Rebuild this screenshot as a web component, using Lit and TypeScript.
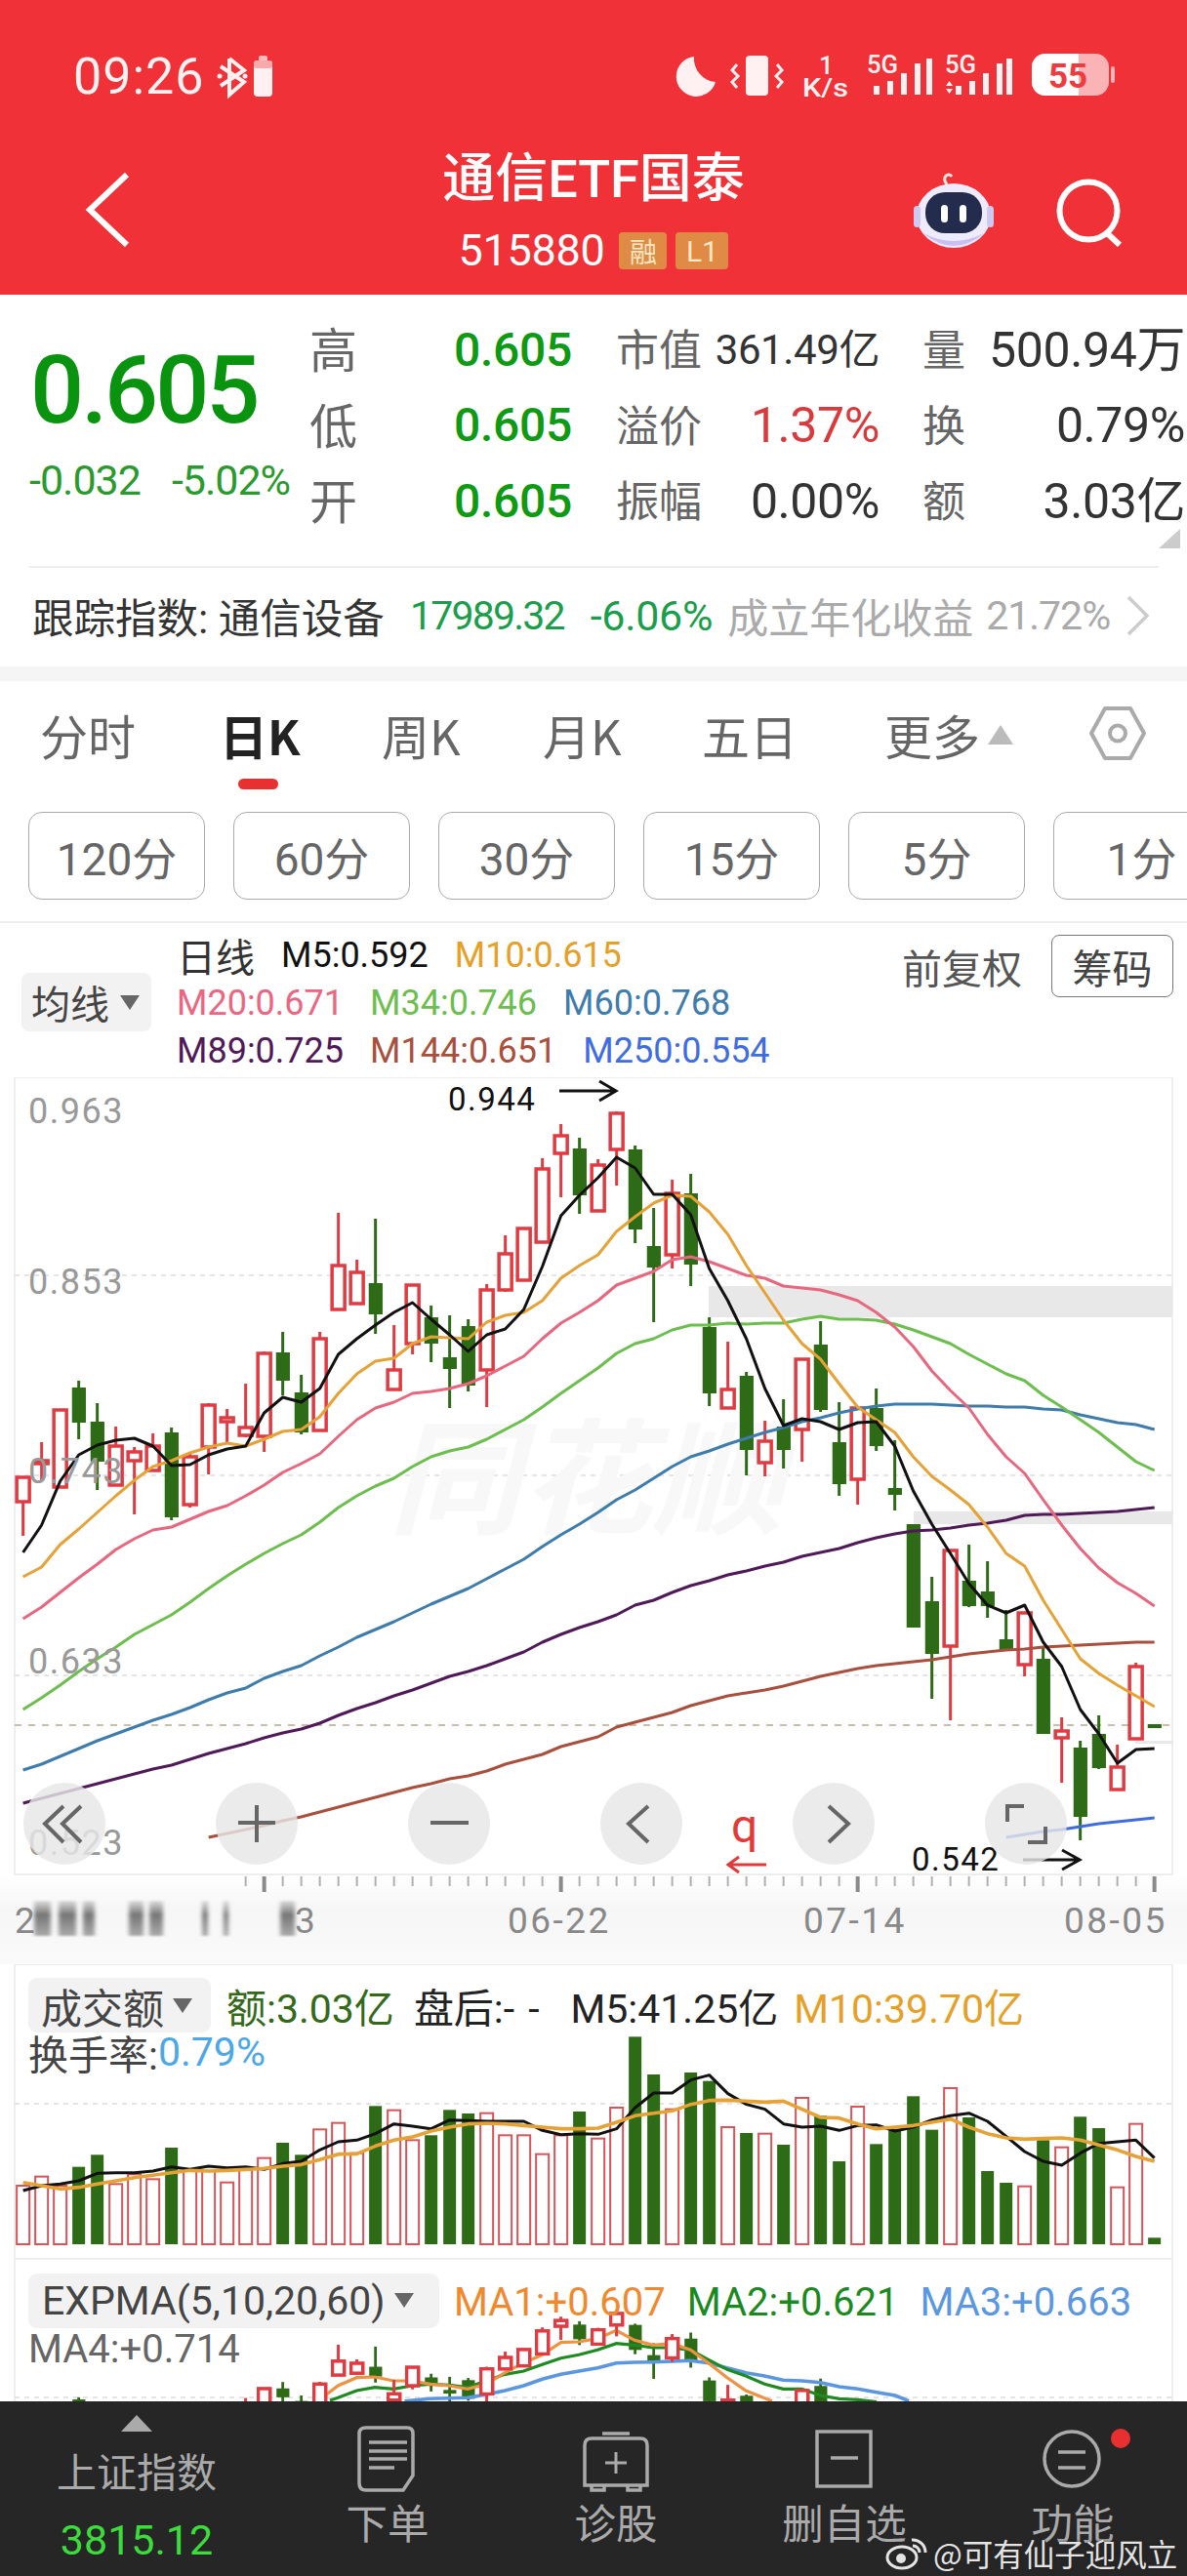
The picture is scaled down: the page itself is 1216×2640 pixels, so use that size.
import { LitElement, html, css, svg } from "lit";
import { customElement } from "lit/decorators.js";

type C = [number, number, number, number, number];
// 1 = up (hollow red), 0 = down (solid green); hi, top, bottom, lo
const CANDLES: C[] = [
  [1,1513,1514,1539,1574],[1,1478,1497,1500,1517],[1,1445,1445,1524,1524],[0,1415,1422,1458,1475],[0,1438,1457,1498,1527],
  [1,1462,1482,1522,1522],[1,1483,1488,1497,1552],[1,1469,1482,1507,1507],[0,1463,1468,1555,1558],[1,1490,1493,1542,1545],
  [1,1438,1440,1483,1511],[1,1444,1453,1457,1480],[1,1418,1463,1471,1473],[1,1385,1387,1472,1488],[0,1365,1386,1415,1430],
  [0,1409,1427,1468,1470],[1,1365,1372,1466,1466],[1,1243,1297,1342,1342],[1,1291,1304,1336,1336],[0,1249,1315,1347,1367],
  [1,1358,1404,1424,1424],[1,1316,1317,1377,1388],[0,1338,1350,1377,1396],[0,1348,1391,1403,1443],[0,1352,1359,1420,1426],
  [1,1316,1322,1404,1442],[1,1266,1285,1322,1324],[1,1258,1259,1312,1312],[1,1187,1198,1273,1273],[1,1152,1164,1182,1227],
  [0,1166,1177,1225,1244],[1,1188,1194,1241,1241],[1,1139,1141,1178,1215],[0,1174,1178,1260,1274],[0,1238,1277,1299,1355],
  [1,1209,1223,1286,1300],[0,1203,1223,1296,1318],[0,1350,1360,1428,1441],[1,1375,1424,1443,1443],[0,1406,1410,1486,1512],
  [1,1456,1477,1499,1513],[0,1434,1462,1486,1505],[1,1392,1393,1465,1498],[0,1354,1378,1445,1447],[0,1437,1478,1521,1533],
  [1,1442,1443,1516,1542],[0,1423,1443,1482,1487],[0,1476,1525,1532,1548],[0,1562,1562,1668,1668],[0,1616,1641,1695,1741],
  [1,1588,1589,1687,1763],[0,1583,1620,1646,1647],[0,1600,1631,1646,1658],[0,1650,1680,1692,1692],[1,1652,1653,1706,1718],
  [0,1687,1700,1777,1777],[1,1760,1774,1781,1827],[0,1784,1791,1862,1886],[0,1758,1777,1812,1813],[1,1788,1811,1834,1834],
  [1,1704,1708,1782,1782],[0,1767,1767,1771,1771],
];
const M5 = [1591,1563,1518,1491,1481,1476,1474,1482,1502,1501,1491,1485,1482,1448,1432,1437,1423,1388,1372,1358,1345,1335,1352,1368,1385,1368,1362,1342,1298,1246,1225,1207,1186,1197,1224,1224,1245,1300,1333,1372,1423,1461,1454,1457,1465,1458,1457,1482,1528,1562,1592,1623,1645,1653,1645,1683,1708,1752,1777,1807,1793,1792];
const M10 = [1616,1606,1583,1567,1550,1533,1517,1503,1497,1489,1483,1479,1482,1475,1467,1465,1452,1428,1408,1395,1392,1377,1370,1371,1372,1355,1348,1345,1333,1310,1297,1286,1262,1247,1233,1225,1226,1242,1265,1297,1325,1353,1377,1393,1418,1442,1455,1468,1493,1513,1527,1542,1565,1592,1605,1640,1670,1700,1715,1727,1738,1749];
const M20 = [1659,1647,1632,1617,1603,1588,1577,1568,1565,1557,1549,1543,1533,1522,1509,1500,1490,1472,1455,1443,1437,1428,1426,1423,1418,1410,1400,1390,1372,1356,1345,1333,1317,1310,1303,1291,1288,1293,1300,1307,1310,1318,1320,1322,1327,1333,1345,1360,1380,1405,1425,1443,1470,1493,1510,1537,1563,1587,1607,1622,1633,1646];
const M34 = [1752,1740,1727,1713,1700,1688,1675,1665,1655,1642,1628,1615,1603,1592,1582,1573,1560,1545,1533,1523,1515,1503,1493,1487,1483,1475,1465,1455,1442,1428,1415,1402,1387,1377,1372,1363,1358,1358,1356,1357,1356,1356,1352,1349,1352,1352,1353,1357,1363,1370,1377,1388,1398,1408,1415,1430,1442,1455,1468,1483,1498,1507];
const M60 = [1814,1808,1800,1792,1784,1777,1770,1763,1757,1750,1742,1735,1730,1720,1713,1707,1697,1688,1678,1670,1662,1653,1644,1636,1628,1618,1608,1598,1585,1573,1562,1550,1537,1527,1515,1503,1493,1487,1480,1474,1468,1463,1457,1453,1448,1444,1441,1439,1439,1439,1440,1441,1441,1442,1442,1444,1445,1450,1454,1458,1460,1465];
const M89 = [1848,1843,1838,1833,1828,1823,1818,1813,1809,1803,1797,1792,1787,1781,1776,1772,1766,1758,1751,1745,1738,1732,1725,1718,1713,1707,1700,1693,1683,1675,1668,1662,1655,1645,1640,1632,1625,1620,1614,1610,1605,1601,1595,1591,1587,1581,1576,1572,1569,1568,1566,1563,1561,1558,1553,1552,1552,1551,1550,1549,1547,1545];
const M144 = [1883,1879,1875,1871,1866,1862,1857,1852,1847,1842,1837,1832,1828,1823,1820,1815,1808,1803,1798,1790,1785,1780,1770,1765,1760,1755,1748,1743,1738,1735,1732,1728,1723,1718,1714,1710,1707,1705,1703,1701,1698,1695,1693,1691,1690,1688,1687,1686,1685,1684,1683,1683];
const M250 = [1883,1880,1877,1875,1872,1869,1867,1865,1863];

// volume panel: [up?, top] in zoom-row units
const VOL: [number, number][] = [[1,780],[1,752],[1,780],[0,722],[0,685],[1,775],[1,745],[1,760],[0,663],[1,735],[1,735],[1,770],[1,730],[1,695],[0,648],[0,685],[1,607],[1,587],[1,680],[0,535],[1,548],[1,640],[0,625],[0,547],[0,558],[1,557],[1,625],[1,625],[1,683],[1,625],[0,552],[1,635],[1,540],[0,322],[0,438],[1,545],[0,432],[0,458],[1,600],[0,618],[1,620],[0,654],[1,510],[0,565],[0,705],[1,537],[0,652],[0,605],[0,505],[0,608],[1,480],[0,570],[0,735],[0,771],[1,782],[0,640],[1,662],[0,568],[0,603],[1,785],[1,590],[0,940]];
const VB = [795,780,775,765,742,740,740,735,722,730,720,725,722,730,712,705,670,645,640,620,590,597,605,578,580,582,582,582,610,623,620,622,605,540,495,495,455,440,497,530,545,590,600,597,610,595,593,612,600,578,565,557,582,628,675,705,717,680,650,645,640,695];
const VO = [770,780,790,785,775,765,755,748,740,733,735,733,730,727,720,715,700,683,682,658,640,630,612,600,590,588,590,595,600,605,605,603,585,565,557,550,530,518,517,520,523,520,545,570,572,590,605,600,595,585,575,600,620,633,637,635,633,640,655,670,690,705];

const E_OR = [[512,240],[543,195],[573,170],[602,168],[632,180],[662,180],[691,190],[721,195],[751,205],[781,190],[811,155],[841,125],[871,100],[901,62],[930,60],[960,50],[990,25],[1019,55],[1049,70],[1079,65],[1109,85],[1138,125],[1168,170],[1198,210],[1240,242]];
const E_GR = [[530,240],[543,232],[573,210],[602,200],[632,205],[662,195],[691,190],[721,193],[751,200],[781,180],[811,160],[841,150],[871,130],[901,110],[930,100],[960,85],[990,65],[1019,70],[1049,78],[1079,78],[1109,85],[1138,115],[1168,145],[1198,165],[1228,190],[1258,205],[1288,205],[1318,225],[1348,235],[1378,238],[1408,245]];
const E_BL = [[650,242],[691,235],[721,233],[751,232],[781,222],[811,210],[841,195],[871,175],[901,160],[930,150],[960,140],[990,125],[1019,123],[1049,122],[1079,120],[1109,118],[1138,125],[1168,140],[1198,155],[1228,165],[1258,178],[1288,180],[1318,185],[1348,198],[1378,205],[1408,215],[1438,225],[1460,242]];

const X = (i: number) => 23.65 + 19 * i;
const GREEN = "#2e6b16";
const RED = "#df3b42";

const linePts = (ys: number[], start = 0) => ys.map((y, i) => `${X(i + start).toFixed(1)},${y}`).join(" ");

function candle(c: C, i: number, map: (y: number) => number, bw: number, sw: number) {
  const [up, hi, top, bot, lo] = c;
  const x = X(i);
  const h = map(hi), t = map(top), b = map(bot), l = map(lo);
  if (up) {
    return svg`<path d="M${x} ${h}V${t}M${x} ${b}V${l}" stroke=${RED} stroke-width=${sw} fill="none"/>
      <rect x=${x - bw / 2} y=${t} width=${bw} height=${Math.max(b - t, 1)} fill="#fff" stroke=${RED} stroke-width=${sw + 0.5}/>`;
  }
  return svg`<path d="M${x} ${h}V${l}" stroke=${GREEN} stroke-width=${sw}/>
    <rect x=${x - bw / 2 - 0.4} y=${t} width=${bw + 1.2} height=${Math.max(b - t, 3)} fill=${GREEN}/>`;
}

@customElement("main-chart")
class MainChart extends LitElement {
  static styles = css`
    :host { display: block; height: 909px; }
    svg { display: block; width: 1216px; height: 909px; }
    .ax { font: 36px Roboto, sans-serif; fill: #999; letter-spacing: 1.5px; }
    .mark { font: 33px Roboto, sans-serif; fill: #111; letter-spacing: 1.5px; }
    .date { font: 37px Roboto, sans-serif; fill: #888; letter-spacing: 2.5px; }
    .wm { font: italic 700 128px "Noto Sans CJK SC", sans-serif; fill: #f8f8f8; }
    .q { font: 48px Roboto, sans-serif; fill: #e03a3a; }
  `;
  render() {
    const lines: [number[], string, number][] = [
      [M250, "#3f6cdf", 53], [M144, "#a84f3d", 10], [M89, "#4f1a57", 0], [M60, "#3e7cab", 0],
      [M34, "#6dbd4f", 0], [M20, "#e7677f", 0], [M10, "#e5a236", 0], [M5, "#111", 0],
    ];
    const ticks = [];
    for (let i = 12; i <= 61; i++) {
      const major = (i - 13) % 16 === 0;
      ticks.push(svg`<path d="M${X(i)} 1923V${major ? 1939 : 1933}" stroke=${major ? "#8a8a8a" : "#b0b0b0"} stroke-width=${major ? 4 : 2}/>`);
    }
    const blots: [number, number][] = [[35,17],[60,18],[85,12],[132,15],[153,14],[207,6],[229,5],[287,15]];
    const buttons = [66, 263, 460, 657, 854, 1051];
    return html`<svg viewBox="0 1104 1216 909" aria-hidden="true">
      <defs>
        <linearGradient id="blot" x1="0" y1="0" x2="0" y2="1">
          <stop offset="0" stop-color="#ddd"/><stop offset=".4" stop-color="#777"/><stop offset="1" stop-color="#aaa"/>
        </linearGradient>
        <linearGradient id="foot" x1="0" y1="0" x2="0" y2="1">
          <stop offset="0" stop-color="#fff"/><stop offset=".4" stop-color="#f6f6f6"/><stop offset="1" stop-color="#fafafa"/>
        </linearGradient>
        <filter id="soft" x="-10%" y="-10%" width="120%" height="120%"><feGaussianBlur stdDeviation="2.2 1.2"/></filter>
      </defs>
      <rect x="0" y="1921" width="1216" height="92" fill="url(#foot)"/>
      <rect x="15" y="1104" width="1186" height="817" fill="#fff" stroke="#eee" stroke-width="2"/>
      <rect x="726" y="1318" width="475" height="32" fill="#e8e8e8"/>
      <rect x="936" y="1549" width="265" height="13" fill="#e8e8e8"/>
      <rect x="1163" y="1784" width="38" height="3" fill="#e8e8e8"/>
      <path d="M15 1307H1201M15 1512H1201M15 1717H1201" stroke="#ddd" stroke-width="1.5" stroke-dasharray="5 5"/>
      <path d="M15 1768H1201" stroke="#b8a98a" stroke-width="1.5" stroke-dasharray="7 7"/>
      <text class="wm" x="398" y="1562" textLength="405" lengthAdjust="spacingAndGlyphs">同花顺</text>
      ${CANDLES.map((c, i) => candle(c, i, (y) => y, 13, 3))}
      ${lines.map(([ys, col, st]) => svg`<polyline points=${linePts(ys, st)} fill="none" stroke=${col} stroke-width="3" stroke-linejoin="round"/>`)}
      <text class="ax" x="29" y="1151">0.963</text>
      <text class="ax" x="29" y="1326">0.853</text>
      <text class="ax" x="29" y="1520">0.743</text>
      <text class="ax" x="29" y="1715">0.633</text>
      <text class="ax" x="29" y="1901">0.523</text>
      <text class="mark" x="459" y="1138">0.944</text>
      <path d="M573 1118H631M614 1108L631 1118L614 1128" stroke="#111" stroke-width="3" fill="none"/>
      <text class="mark" x="934" y="1917">0.542</text>
      <path d="M1048 1906H1106M1088 1896L1106 1906L1088 1916" stroke="#111" stroke-width="3" fill="none"/>
      <text class="q" x="749" y="1888">q</text>
      <path d="M746 1911H785M757 1903L746 1911L757 1919" stroke="#e03a3a" stroke-width="3" fill="none"/>
      ${buttons.map((x) => svg`<circle cx=${x} cy="1869" r="42" fill="#e6e6e6" fill-opacity=".82"/>`)}
      <g stroke="#666" stroke-width="4" fill="none">
        <path d="M65 1851L46 1869L65 1888M83 1851L64 1869L83 1888"/>
        <path d="M244 1868H282M263 1850V1888"/>
        <path d="M441 1868H480"/>
        <path d="M664 1851L644 1869L664 1888"/>
        <path d="M849 1851L869 1869L849 1888"/>
        <path d="M1049 1851H1032V1867M1071 1872V1888H1053"/>
      </g>
      ${ticks}
      <g filter="url(#soft)">
        ${blots.map(([x, w]) => svg`<rect x=${x} y="1948" width=${w} height="36" fill="url(#blot)"/>`)}
      </g>
      <text class="date" x="15" y="1981">2</text>
      <text class="date" x="302" y="1981">3</text>
      <text class="date" x="520" y="1981">06-22</text>
      <text class="date" x="823" y="1981">07-14</text>
      <text class="date" x="1090" y="1981">08-05</text>
    </svg>`;
  }
}

@customElement("vol-chart")
class VolChart extends LitElement {
  static styles = css`
    :host { display: block; position: relative; height: 302px; }
    svg { display: block; width: 1216px; height: 302px; }
    .leg { position: absolute; left: 29px; top: 14px; width: 1170px; font: 41px Roboto, "Noto Sans CJK SC", sans-serif; color: #222; white-space: nowrap; }
    .row { display: flex; align-items: center; height: 56px; }
    .chip { width: 187px; height: 56px; box-sizing: border-box; padding-left: 13px; background: #f2f2f2; border-radius: 9px; display: flex; align-items: center; gap: 9px; color: #444; font-size: 42px; margin-right: 16px; flex: none; }
    .tri { width: 0; height: 0; border-left: 10px solid transparent; border-right: 10px solid transparent; border-top: 15px solid #666; }
    .a { color: #34691a; margin-right: 20px; }
    .b { margin-right: 18px; color: #222; }
    .b2 { margin-right: 16px; color: #222; }
    .dash { letter-spacing: 14px; }
    .c { color: #e5a028; }
    .turn { height: 40px; display: flex; align-items: center; color: #444; }
    .turn span { color: #4aa8e8; }
  `;
  render() {
    const y = (z: number) => 1980 + z / 3;
    const xz = (i: number) => X(i);
    return html`<svg viewBox="0 2013 1216 302" aria-hidden="true">
      <rect x="15" y="2013" width="1186" height="302" fill="#fff" stroke="#eee" stroke-width="2"/>
      <path d="M15 2156H1201" stroke="#ddd" stroke-width="1.5" stroke-dasharray="5 5"/>
      ${VOL.map(([up, z], i) => up
        ? svg`<rect x=${xz(i) - 6.5} y=${y(z)} width="13" height=${2300 - y(z)} fill="#fff" stroke="#d4555a" stroke-width="2"/>`
        : svg`<rect x=${xz(i) - 6.5} y=${y(z)} width="13" height=${2300 - y(z)} fill=${GREEN}/>`)}
      <polyline points=${VB.map((z, i) => `${xz(i)},${y(z)}`).join(" ")} fill="none" stroke="#111" stroke-width="3" stroke-linejoin="round"/>
      <polyline points=${VO.map((z, i) => `${xz(i)},${y(z)}`).join(" ")} fill="none" stroke="#e5a236" stroke-width="3.6" stroke-linejoin="round"/>
    </svg>
    <div class="leg">
      <div class="row">
        <div class="chip">成交额<i class="tri"></i></div>
        <span class="a">额:3.03亿</span><span class="b">盘后:<span class="dash">--</span></span><span class="b2">M5:41.25亿</span><span class="c">M10:39.70亿</span>
      </div>
      <div class="turn">换手率:<span>0.79%</span></div>
    </div>`;
  }
}

@customElement("expma-chart")
class ExpmaChart extends LitElement {
  static styles = css`
    :host { display: block; position: relative; height: 146px; overflow: hidden; }
    svg { display: block; width: 1216px; height: 146px; }
    .leg { position: absolute; left: 29px; top: 16px; width: 1170px; font: 40px Roboto, "Noto Sans CJK SC", sans-serif; white-space: nowrap; }
    .row { display: flex; align-items: center; height: 56px; }
    .chip { width: 421px; height: 56px; margin-top: -3px; box-sizing: border-box; padding-left: 14px; background: #f2f2f2; border-radius: 9px; display: flex; align-items: center; gap: 9px; color: #444; font-size: 41px; margin-right: 15px; flex: none; }
    .tri { width: 0; height: 0; border-left: 10px solid transparent; border-right: 10px solid transparent; border-top: 15px solid #666; }
    .m1 { color: #f0892e; margin-right: 22px; }
    .m2 { color: #1a8a1f; margin-right: 22px; }
    .m3 { color: #5a97e0; }
    .m4 { color: #666; height: 40px; display: flex; align-items: center; }
  `;
  render() {
    const map = (y: number) => 2403 + (y - 1243) * 0.313;
    const pts = (a: number[][]) => a.map(([x, y]) => `${(x / 1.568).toFixed(1)},${(2380 + y / 3).toFixed(1)}`).join(" ");
    return html`<svg viewBox="0 2315 1216 146" aria-hidden="true">
      <rect x="15" y="2315" width="1186" height="160" fill="#fff" stroke="#eee" stroke-width="2"/>
      <path d="M15 2457H1201" stroke="#ddd" stroke-width="1.5" stroke-dasharray="5 5"/>
      ${CANDLES.slice(0, 46).map((c, i) => candle(c, i, map, 12, 2.8))}
      <polyline points=${pts(E_BL)} fill="none" stroke="#5a97e0" stroke-width="3.6"/>
      <polyline points=${pts(E_GR)} fill="none" stroke="#1f8a22" stroke-width="3.2"/>
      <polyline points=${pts(E_OR)} fill="none" stroke="#ee9342" stroke-width="3.2"/>
      ${CANDLES.slice(0, 46).map((c, i) => c[0] ? candle(c, i, map, 12, 2.8) : "")}
    </svg>
    <div class="leg">
      <div class="row">
        <div class="chip">EXPMA(5,10,20,60)<i class="tri"></i></div>
        <span class="m1">MA1:+0.607</span><span class="m2">MA2:+0.621</span><span class="m3">MA3:+0.663</span>
      </div>
      <div class="m4">MA4:+0.714</div>
    </div>`;
  }
}

@customElement("app-root")
export class AppRoot extends LitElement {
  static styles = css`
    :host { display: block; width: 1216px; height: 2640px; overflow: hidden; background: #fff; position: relative; font-family: Roboto, "Noto Sans CJK SC", sans-serif; color: #333; }

    header { height: 302px; background: #f03138; color: #fff; display: flex; flex-direction: column; }
    .status { height: 152px; flex: none; }
    .status svg { display: block; width: 1216px; height: 152px; }
    .clock { font: 400 52px Roboto, sans-serif; fill: #fff1f1; letter-spacing: 1px; }
    .g5 { font: 500 25px Roboto, sans-serif; fill: #fff1f1; }
    .ks { font: 500 25px Roboto, sans-serif; fill: #fff1f1; }
    .ks.one { font-size: 26px; }
    .bat { font: 700 35px Roboto, sans-serif; fill: #ef3a40; }
    .nav { flex: 1; display: grid; grid-template-columns: 1fr auto 1fr; }
    .nav-l { padding: 24px 0 0 86px; }
    .nav-c { display: flex; flex-direction: column; align-items: center; }
    .title { font: 500 54px/56px Roboto, "Noto Sans CJK SC", sans-serif; color: #fff; margin-top: 4px; white-space: nowrap; }
    .code { display: flex; align-items: center; margin-top: 26px; gap: 9px; font: 400 45px/38px Roboto, sans-serif; }
    .code b { font-weight: 400; margin-right: 6px; letter-spacing: -.3px; }
    .tag { background: #e08b45; color: #fde7c4; border-radius: 4px; height: 38px; display: flex; align-items: center; justify-content: center; font: 400 28px "Noto Sans CJK SC", sans-serif; }
    .tag.a { width: 49px; } .tag.b { width: 54px; font-family: Roboto, sans-serif; font-size: 30px; }
    .nav-r { display: flex; justify-content: flex-end; align-items: flex-start; padding: 25px 66px 0 0; gap: 62px; }
    .srch { margin-top: 6px; }

    .quote { height: 278px; display: flex; position: relative; padding-top: 18px; box-sizing: border-box; }
    .big { width: 318px; flex: none; box-sizing: border-box; padding-left: 31px; }
    .price { font: 500 97px/100px Roboto, sans-serif; color: #0a930f; margin-top: 30px; letter-spacing: -3px; }
    .chg { display: flex; gap: 32px; font: 400 43px/46px Roboto, sans-serif; color: #2a9a2e; margin-top: 19px; margin-left: -1px; letter-spacing: -1px; white-space: nowrap; }
    .grid { display: grid; grid-template-columns: 147px 167px 269px 45px 268px; grid-auto-rows: 77.5px; align-items: center; }
    .lab { font: 400 49px/60px "Noto Sans CJK SC", sans-serif; color: #666; margin-left: -1px; margin-top: -5px; }
    .v { font: 500 48px/1 Roboto, sans-serif; color: #0f9a14; letter-spacing: -.3px; }
    .kv { display: flex; justify-content: space-between; align-items: center; }
    .kv .lab { font-size: 44px; }
    .num { font: 400 50px/56px Roboto, "Noto Sans CJK SC", sans-serif; color: #333; letter-spacing: -.4px; white-space: nowrap; height: 56px; }
    .num.sm { font-size: 42px; }
    .num.up { color: #d93a3d; }
    .corner { position: absolute; right: 7px; bottom: 18px; width: 0; height: 0; border-left: 22px solid transparent; border-bottom: 20px solid #ccc; }

    .track { margin: 0 29px 0 30px; border-top: 2px solid #eee; height: 103px; padding-bottom: 4px; box-sizing: border-box; display: flex; align-items: center; white-space: nowrap; font: 400 41px Roboto, "Noto Sans CJK SC", sans-serif; }
    .track .n { color: #333; width: 390px; padding-left: 3px; box-sizing: border-box; font-size: 42.5px; }
    .track .g { color: #1a9e4b; font-size: 41px; letter-spacing: -1.8px; }
    .track .g2 { margin-left: 27px; font-size: 43px; letter-spacing: -.3px; }
    .track .i { color: #aaa; margin-left: 15px; font-size: 42px; }
    .track .pc { color: #aaa; margin-left: 13px; letter-spacing: -1px; }
    .track svg { margin-left: 17px; flex: none; }
    .gap { height: 15px; background: #f5f5f5; }

    .tabs { height: 134px; box-sizing: border-box; padding-left: 41px; display: flex; align-items: flex-start; position: relative; }
    .tab { font: 400 49px/58px "Noto Sans CJK SC", Roboto, sans-serif; color: #666; padding-top: 26px; position: relative; white-space: nowrap; }
    .tab.on { color: #222; font-weight: 700; }
    .tab.on::after { content: ""; position: absolute; left: 19px; top: 100px; width: 41px; height: 11px; border-radius: 6px; background: #e93030; }
    .t0 { width: 184px; } .t1 { width: 166px; } .t2 { width: 165px; } .t3 { width: 163px; } .t4 { width: 187px; } .t5 { width: 210px; display: flex; align-items: center; gap: 8px; }
    .up-tri { width: 0; height: 0; border-left: 13px solid transparent; border-right: 13px solid transparent; border-bottom: 20px solid #bbb; }
    .hex { margin-top: 26px; flex: none; }

    .periods { height: 90px; padding-left: 29px; display: flex; gap: 29px; overflow: hidden; }
    .p { flex: none; width: 181px; box-sizing: border-box; border: 1.5px solid #aaa; border-radius: 14px; display: flex; align-items: center; justify-content: center; font: 400 46px Roboto, "Noto Sans CJK SC", sans-serif; color: #666; }

    .legend { margin-top: 22px; height: 160px; box-sizing: border-box; border-top: 2px solid #eee; position: relative; display: flex; padding-left: 22px; font: 400 36px Roboto, "Noto Sans CJK SC", sans-serif; }
    .ma-chip { width: 133px; height: 60px; margin-top: 51px; background: #f2f2f2; border-radius: 8px; box-sizing: border-box; padding-left: 10px; display: flex; align-items: center; gap: 11px; color: #444; font-size: 40px; flex: none; }
    .ma-chip i { width: 0; height: 0; border-left: 10px solid transparent; border-right: 10px solid transparent; border-top: 15px solid #666; }
    .rows { margin-left: 26px; padding-top: 8px; }
    .rw { display: flex; gap: 27px; height: 49px; align-items: center; white-space: nowrap; }
    .ri { font-size: 40px; color: #333; }
    .right { position: absolute; right: 14px; top: 12px; display: flex; align-items: center; gap: 30px; }
    .right span { font-size: 41px; color: #555; }
    .chou { width: 125px; height: 64px; box-sizing: border-box; border: 1.5px solid #777; border-radius: 8px; display: flex; align-items: center; justify-content: center; font-size: 41px; color: #444; }

    .dock { position: absolute; left: 0; top: 2461px; width: 1216px; height: 179px; background: #262626; display: grid; grid-template-columns: 280px repeat(4, 234px); color: #aaa; }
    .it { display: flex; flex-direction: column; align-items: center; }
    .it svg { display: block; margin-top: 26px; height: 66px; width: 80px; overflow: visible; }
    .it .l { font: 400 42.5px/44px "Noto Sans CJK SC", sans-serif; margin-top: 9px; white-space: nowrap; }
    .first .t { width: 0; height: 0; margin-top: 14px; border-left: 16px solid transparent; border-right: 16px solid transparent; border-bottom: 17px solid #aaa; }
    .first .l { font-size: 41px; margin-top: 17px; }
    .first .n { font: 400 43px/50px Roboto, sans-serif; color: #3ddc3d; margin-top: 25px; }
    .weibo { position: absolute; left: 907px; top: 2593px; display: flex; align-items: center; gap: 5px; color: #e4e4e4; font: 400 31.5px "Noto Sans CJK SC", sans-serif; white-space: nowrap; text-shadow: 0 0 3px #222; }
  `;

  render() {
    const bars = (xs: number[]) => svg`${xs.map((x, i) => {
      const tops = [88, 83, 75, 65, 60];
      return svg`<rect x=${x} y=${tops[i]} width="6" height=${97 - tops[i]} fill="#fff1f1"/>`;
    })}`;
    return html`
      <header>
        <div class="status">
          <svg viewBox="0 0 1216 152" aria-hidden="true">
            <text class="clock" x="75" y="96">09:26</text>
            <path d="M235 60V97L250 84L226 68M226 88L250 72L235 60" fill="none" stroke="#fff1f1" stroke-width="4"/>
            <circle cx="225" cy="78" r="2.5" fill="#fff1f1"/><circle cx="251" cy="78" r="2.5" fill="#fff1f1"/>
            <rect x="265" y="57" width="9" height="6" rx="2" fill="#fbb"/>
            <rect x="260" y="62" width="19" height="37" rx="4" fill="#fff1f1"/>
            <rect x="260" y="62" width="19" height="8" rx="3" fill="#f8a9ab"/>
            <path d="M711 58A20.5 20.5 0 1 0 733 84A24 24 0 0 1 711 58Z" fill="#fff1f1"/>
            <rect x="764" y="57" width="23" height="41" rx="4" fill="#fff1f1"/>
            <path d="M755 66L750 72L756 78L750 84L755 90M796 66L801 72L795 78L801 84L796 90" fill="none" stroke="#fff1f1" stroke-width="3"/>
            <text class="ks one" x="839" y="76">1</text>
            <text class="ks" x="822" y="99" textLength="47" lengthAdjust="spacingAndGlyphs">K/s</text>
            <text class="g5" x="888" y="75" textLength="32" lengthAdjust="spacingAndGlyphs">5G</text>
            ${bars([895, 909, 923, 937, 949])}
            <text class="g5" x="968" y="75" textLength="32" lengthAdjust="spacingAndGlyphs">5G</text>
            <path d="M969 88L972.5 83L976 88ZM969 91L972.5 96L976 91Z" fill="#fff1f1"/>
            ${bars([979, 993, 1007, 1021, 1031])}
            <rect x="1057" y="55" width="79" height="43" rx="14" fill="#fbb4b6"/>
            <path d="M1071 55H1105V98H1071A14 14 0 0 1 1057 84V69A14 14 0 0 1 1071 55Z" fill="#fff"/>
            <rect x="1138" y="68" width="4" height="17" rx="2" fill="#fbb4b6"/>
            <text class="bat" x="1074" y="90">55</text>
          </svg>
        </div>
        <div class="nav">
          <div class="nav-l">
            <svg width="48" height="78" viewBox="0 0 48 78" aria-hidden="true"><path d="M44 3L6 39L44 75" fill="none" stroke="#fff" stroke-width="6"/></svg>
          </div>
          <div class="nav-c">
            <div class="title">通信ETF国泰</div>
            <div class="code"><b>515880</b><span class="tag a">融</span><span class="tag b">L1</span></div>
          </div>
          <div class="nav-r">
            <svg width="86" height="78" viewBox="0 0 86 78" aria-hidden="true">
              <path d="M36 12C30 4 38 -1 41 4" fill="none" stroke="#f3e3dd" stroke-width="3"/>
              <ellipse cx="43" cy="44" rx="38" ry="33" fill="#eeebfc"/>
              <path d="M12 62Q43 88 74 62Q43 78 12 62Z" fill="#c9bff2"/>
              <rect x="2" y="34" width="7" height="22" rx="3.5" fill="#cfc8f1"/>
              <rect x="77" y="34" width="7" height="22" rx="3.5" fill="#cfc8f1"/>
              <rect x="14" y="20" width="58" height="42" rx="20" fill="#232c4c"/>
              <rect x="30" y="33" width="7" height="18" rx="3.5" fill="#fff"/>
              <rect x="49" y="33" width="7" height="18" rx="3.5" fill="#fff"/>
            </svg>
            <svg class="srch" width="68" height="70" viewBox="0 0 68 70" aria-hidden="true">
              <circle cx="33" cy="33" r="29.5" fill="none" stroke="#fff" stroke-width="6"/>
              <path d="M50 54L65 68" stroke="#fff" stroke-width="6"/>
            </svg>
          </div>
        </div>
      </header>

      <section class="quote">
        <div class="big">
          <div class="price">0.605</div>
          <div class="chg"><span>-0.032</span><span>-5.02%</span></div>
        </div>
        <div class="grid">
          <span class="lab">高</span><span class="v">0.605</span>
          <div class="kv"><span class="lab">市值</span><span class="num sm">361.49亿</span></div><span></span>
          <div class="kv"><span class="lab">量</span><span class="num">500.94万</span></div>
          <span class="lab">低</span><span class="v">0.605</span>
          <div class="kv"><span class="lab">溢价</span><span class="num up">1.37%</span></div><span></span>
          <div class="kv"><span class="lab">换</span><span class="num">0.79%</span></div>
          <span class="lab">开</span><span class="v">0.605</span>
          <div class="kv"><span class="lab">振幅</span><span class="num">0.00%</span></div><span></span>
          <div class="kv"><span class="lab">额</span><span class="num">3.03亿</span></div>
        </div>
        <i class="corner"></i>
      </section>
      <div class="track">
        <span class="n">跟踪指数: 通信设备</span>
        <span class="g">17989.32</span><span class="g g2">-6.06%</span>
        <span class="i">成立年化收益</span><span class="pc">21.72%</span>
        <svg width="24" height="42" viewBox="0 0 24 42" aria-hidden="true"><path d="M2 2L21 21L2 40" fill="none" stroke="#ccc" stroke-width="3.5"/></svg>
      </div>
      <div class="gap"></div>

      <nav class="tabs">
        <div class="tab t0">分时</div>
        <div class="tab t1 on">日K</div>
        <div class="tab t2">周K</div>
        <div class="tab t3">月K</div>
        <div class="tab t4">五日</div>
        <div class="tab t5">更多<i class="up-tri"></i></div>
        <svg class="hex" width="58" height="55" viewBox="0 0 58 55" aria-hidden="true">
          <path d="M16 2H42L56 27.5L42 53H16L2 27.5Z" fill="none" stroke="#aaa" stroke-width="4" stroke-linejoin="round"/>
          <circle cx="29" cy="27.5" r="8" fill="none" stroke="#aaa" stroke-width="4"/>
        </svg>
      </nav>
      <div class="periods">
        ${["120分","60分","30分","15分","5分","1分"].map((p) => html`<div class="p">${p}</div>`)}
      </div>

      <div class="legend">
        <div class="ma-chip">均线<i></i></div>
        <div class="rows">
          <div class="rw"><span class="ri">日线</span><span style="color:#111">M5:0.592</span><span style="color:#e5a028">M10:0.615</span></div>
          <div class="rw"><span style="color:#ea6682">M20:0.671</span><span style="color:#6dbd4f">M34:0.746</span><span style="color:#3e7cab">M60:0.768</span></div>
          <div class="rw"><span style="color:#4f1a57">M89:0.725</span><span style="color:#a84f3d">M144:0.651</span><span style="color:#3f6cdf">M250:0.554</span></div>
        </div>
        <div class="right"><span>前复权</span><div class="chou">筹码</div></div>
      </div>

      <main-chart></main-chart>
      <vol-chart></vol-chart>
      <expma-chart></expma-chart>

      <footer class="dock">
        <div class="it first">
          <i class="t"></i>
          <div class="l">上证指数</div>
          <div class="n">3815.12</div>
        </div>
        <div class="it">
          <svg viewBox="0 0 80 66" aria-hidden="true"><path d="M18 1H60Q66 1 66 7V50L56 65H18Q11 65 11 58V7Q11 1 18 1Z" fill="none" stroke="#aaa" stroke-width="3.5"/><path d="M21 16H60M21 25H60M21 33H60M21 42H47" stroke="#aaa" stroke-width="3.5"/></svg>
          <div class="l">下单</div>
        </div>
        <div class="it">
          <svg viewBox="0 0 80 66" aria-hidden="true"><path d="M26 7H54M15 12H65Q72 12 72 19V60H8V19Q8 12 15 12ZM15 60V65H28V60M52 60V65H65V60" fill="none" stroke="#aaa" stroke-width="3.5"/><path d="M29 37H51M40 26V48" stroke="#aaa" stroke-width="3"/></svg>
          <div class="l">诊股</div>
        </div>
        <div class="it">
          <svg viewBox="0 0 80 66" aria-hidden="true"><rect x="12" y="5" width="55" height="56" fill="none" stroke="#aaa" stroke-width="3.5"/><path d="M26 32H54" stroke="#aaa" stroke-width="3.5"/></svg>
          <div class="l">删自选</div>
        </div>
        <div class="it">
          <svg viewBox="0 0 80 66" aria-hidden="true"><circle cx="39" cy="33" r="28" fill="none" stroke="#aaa" stroke-width="3.5"/><path d="M25 26H53M25 42H53" stroke="#aaa" stroke-width="3.5"/><circle cx="89" cy="12" r="10" fill="#e93030"/></svg>
          <div class="l">功能</div>
        </div>
      </footer>
      <div class="weibo">
        <svg width="44" height="36" viewBox="0 0 44 36" aria-hidden="true">
          <ellipse cx="17" cy="23" rx="15" ry="11" fill="none" stroke="#e4e4e4" stroke-width="3"/>
          <circle cx="16" cy="24" r="5" fill="#e4e4e4"/>
          <path d="M27 5A13 13 0 0 1 41 18M28 11A7 7 0 0 1 35 18" fill="none" stroke="#e4e4e4" stroke-width="3"/>
        </svg>
        <span>@可有仙子迎风立</span>
      </div>
    `;
  }
}
